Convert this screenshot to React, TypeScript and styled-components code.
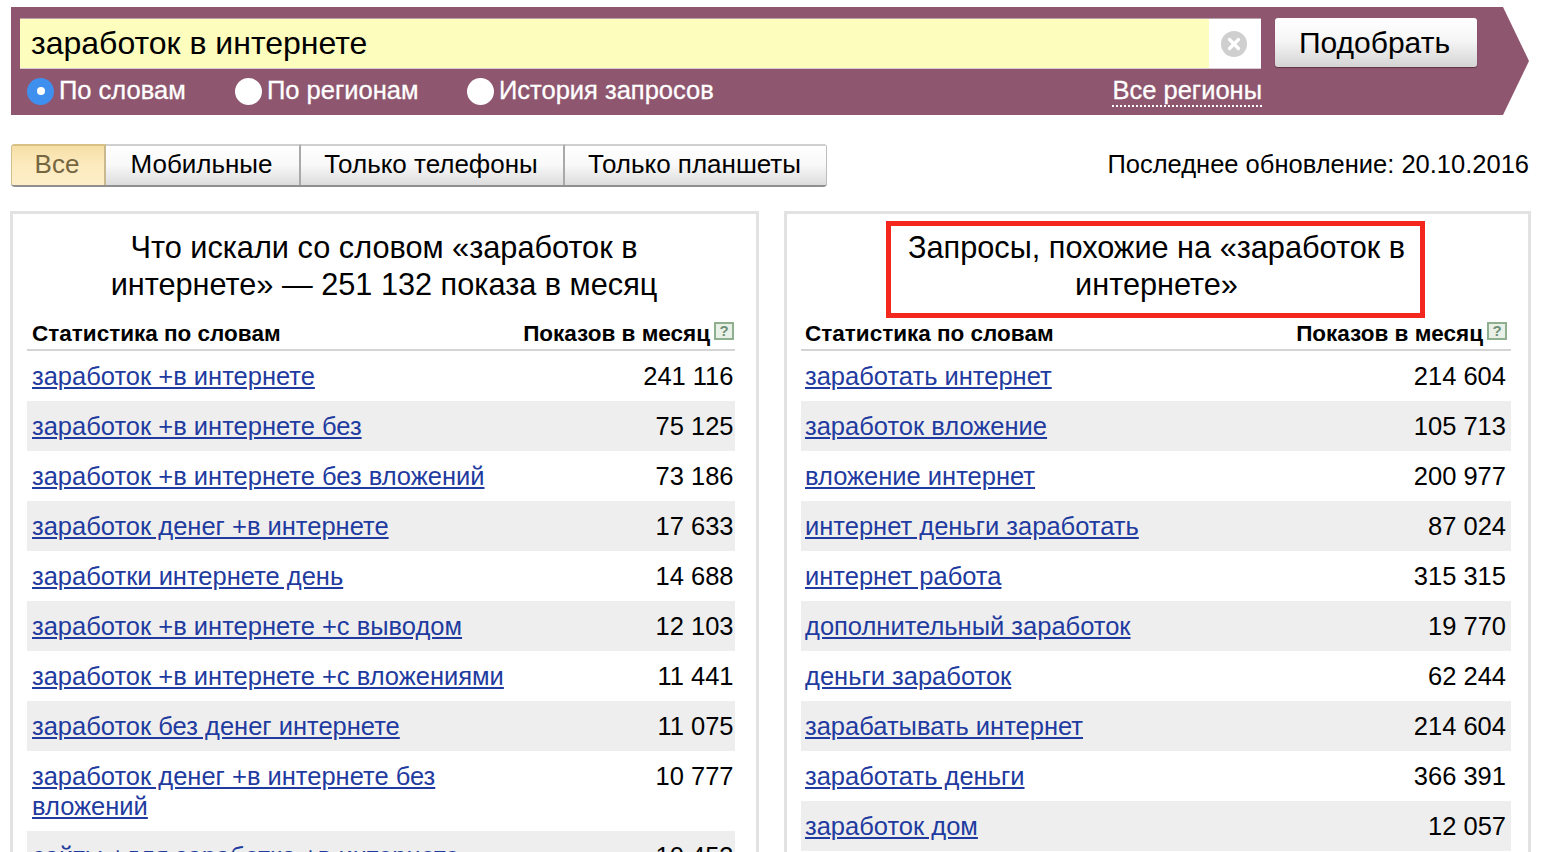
import React from "react";
import styled, { createGlobalStyle } from "styled-components";

const Global = createGlobalStyle`
  html, body { margin: 0; padding: 0; background: #fff; height: 852px; overflow: hidden; }
  body { font-family: "Liberation Sans", Arial, sans-serif; color: #000; }
`;

const Page = styled.div`
  width: 1544px;
  height: 852px;
  overflow: hidden;
  padding: 7px 13px 0 10px;
  box-sizing: border-box;
`;

const SearchBar = styled.div`
  margin-left: 1px;
  margin-right: 2px;
  height: 108px;
  background: #8f576f;
  clip-path: polygon(0 0, 1492px 0, 100% 50%, 1492px 100%, 0 100%);
  padding: 11px 0 0 9px;
  box-sizing: border-box;
`;

const SearchRow = styled.div`
  display: flex;
  align-items: flex-start;
  gap: 14px;
`;

const InputBox = styled.div`
  width: 1241px;
  height: 51px;
  box-sizing: border-box;
  background: #fff;
  border-top: 1px solid #b9a2ac;
  border-bottom: 1px solid #d9cbd1;
  display: flex;
`;

const InputValue = styled.div`
  flex: 1;
  background: #fdfdbd;
  font-size: 32px;
  line-height: 48px;
  padding-left: 11px;
`;

const ClearSlot = styled.div`
  width: 52px;
  display: flex;
  align-items: center;
  justify-content: center;
  padding-right: 2px;
  box-sizing: border-box;
`;

const SearchButton = styled.button`
  width: 202px;
  height: 49px;
  padding: 0 3px 0 0;
  border: 0;
  border-radius: 3px;
  background: linear-gradient(#ffffff 0%, #f6f6f6 45%, #d4d4d4 100%);
  box-shadow: 0 1px 1px rgba(60, 30, 40, 0.6);
  font-family: inherit;
  font-size: 30px;
  color: #000;
`;

const OptionsRow = styled.div`
  display: flex;
  align-items: center;
  height: 44px;
  width: 1242px;
  padding-left: 7px;
  box-sizing: border-box;
`;

const Radio = styled.label<{ $w: number }>`
  display: flex;
  align-items: center;
  gap: 5px;
  width: ${(p) => p.$w}px;
`;

const RadioText = styled.span`
  font-size: 25.5px;
  color: #fff;
  -webkit-text-stroke: 0.3px #fff;
  margin-top: -2px;
`;

const RadioDot = styled.span<{ $on?: boolean }>`
  width: 27px;
  height: 27px;
  flex: none;
  border-radius: 50%;
  background: ${(p) => (p.$on ? "#3f8fee" : "#fff")};
  display: flex;
  align-items: center;
  justify-content: center;
  &::after {
    content: "";
    width: 8px;
    height: 8px;
    border-radius: 50%;
    background: ${(p) => (p.$on ? "#fff" : "transparent")};
  }
`;

const RegionLink = styled.span`
  margin-left: auto;
  font-size: 25.5px;
  color: #fff;
  -webkit-text-stroke: 0.3px #fff;
  line-height: 30px;
  border-bottom: 2px dotted #fff;
`;

const TabsRow = styled.div`
  display: flex;
  align-items: center;
  justify-content: space-between;
  margin-top: 29px;
  margin-left: 1px;
  margin-right: 2px;
  height: 43px;
`;

const Tabs = styled.div`
  display: flex;
  border-radius: 4px;
  overflow: hidden;
  box-shadow: inset 0 0 0 1px #ccc;
  border-bottom: 2px solid #8f8f8f;
  height: 43px;
  box-sizing: border-box;
`;

const Tab = styled.div<{ $w: number; $active?: boolean }>`
  width: ${(p) => p.$w}px;
  box-sizing: border-box;
  display: flex;
  align-items: center;
  justify-content: center;
  font-size: 26px;
  padding: 0 2px 3px 0;
  color: ${(p) => (p.$active ? "#76663f" : "#000")};
  background: ${(p) =>
    p.$active
      ? "linear-gradient(#f6dfa6 0%, #fdebbf 50%, #fdeec9 100%)"
      : "linear-gradient(#ffffff 0%, #f8f8f8 50%, #dcdcdc 100%)"};
  border-top: 2px solid ${(p) => (p.$active ? "#d9c084" : "#cfcfcf")};
  border-left: ${(p) => (p.$active ? "1px solid #d2bd8b" : "0")};
  border-right: 2px solid ${(p) => (p.$active ? "#c9b98f" : "#a9a9a9")};
  &:last-child {
    border-right: 1px solid #bdbdbd;
  }
`;

const Updated = styled.div`
  font-size: 25.5px;
  padding-bottom: 3px;
`;

const Columns = styled.div`
  display: flex;
  gap: 25px;
  margin-top: 24px;
`;

const Panel = styled.section<{ $w: number; $wide?: boolean }>`
  width: ${(p) => p.$w}px;
  height: 660px;
  flex: none;
  box-sizing: border-box;
  border: 3px solid #e2e2e2;
  border-bottom: 0;
  padding: 0 ${(p) => (p.$wide ? 17 : 21)}px 0 14px;
  position: relative;
`;

const Heading = styled.h2<{ $wide?: boolean }>`
  margin: 0;
  padding: 16px ${(p) => (p.$wide ? "16px" : "30px")} 0 ${(p) => (p.$wide ? "17px" : "36px")};
  height: 102px;
  box-sizing: border-box;
  text-align: center;
  font-size: 30.7px;
  line-height: 36.5px;
  font-weight: 400;
`;

const Highlight = styled.div`
  position: absolute;
  left: 99px;
  top: 7px;
  width: 539px;
  height: 97px;
  box-sizing: border-box;
  border: 5px solid #f4271e;
`;

const TableHead = styled.div<{ $wide?: boolean }>`
  display: flex;
  justify-content: space-between;
  align-items: center;
  height: 35px;
  padding: 2px ${(p) => (p.$wide ? 4 : 1)}px 0 ${(p) => (p.$wide ? 4 : 5)}px;
  border-bottom: 2px solid #d4d4d4;
  font-size: 22.5px;
  font-weight: 700;
  box-sizing: border-box;
`;

const HeadRight = styled.span`
  display: flex;
  align-items: center;
`;

const HelpIcon = styled.span`
  width: 20px;
  height: 18px;
  box-sizing: border-box;
  margin-left: 4px;
  margin-top: -6px;
  border: 2px solid #8fb08f;
  background: #e8f0e8;
  color: #6f8f75;
  font-size: 15px;
  line-height: 14px;
  text-align: center;
`;

const Row = styled.div<{ $alt: boolean; $wide?: boolean }>`
  display: flex;
  justify-content: space-between;
  align-items: flex-start;
  padding: 10px ${(p) => (p.$wide ? "5px" : "1.5px")} 10px ${(p) => (p.$wide ? 4 : 5)}px;
  background: ${(p) => (p.$alt ? "#eeeeee" : "#fff")};
  font-size: 25.5px;
  line-height: 30px;
`;

const QueryLink = styled.a`
  color: #1f3ba0;
  text-decoration: underline;
  text-underline-offset: 2px;
  max-width: 480px;
`;

const Count = styled.span`
  white-space: nowrap;
`;

const leftRows: [string, string][] = [
  ["заработок +в интернете", "241 116"],
  ["заработок +в интернете без", "75 125"],
  ["заработок +в интернете без вложений", "73 186"],
  ["заработок денег +в интернете", "17 633"],
  ["заработки интернете день", "14 688"],
  ["заработок +в интернете +с выводом", "12 103"],
  ["заработок +в интернете +с вложениями", "11 441"],
  ["заработок без денег интернете", "11 075"],
  ["заработок денег +в интернете без вложений", "10 777"],
  ["сайты +для заработка +в интернете", "10 453"],
];

const rightRows: [string, string][] = [
  ["заработать интернет", "214 604"],
  ["заработок вложение", "105 713"],
  ["вложение интернет", "200 977"],
  ["интернет деньги заработать", "87 024"],
  ["интернет работа", "315 315"],
  ["дополнительный заработок", "19 770"],
  ["деньги заработок", "62 244"],
  ["зарабатывать интернет", "214 604"],
  ["заработать деньги", "366 391"],
  ["заработок дом", "12 057"],
];

const ClearIcon = () => (
  <svg width="26" height="26" viewBox="0 0 26 26">
    <circle cx="13" cy="13" r="13" fill="#cfcfcf" />
    <path d="M8.5 8.5l9 9M17.5 8.5l-9 9" stroke="#fff" strokeWidth="3.2" strokeLinecap="round" />
  </svg>
);

const StatTable = ({ rows, wide }: { rows: [string, string][]; wide?: boolean }) => (
  <>
    <TableHead $wide={wide}>
      <span>Статистика по словам</span>
      <HeadRight>
        Показов в месяц
        <HelpIcon>?</HelpIcon>
      </HeadRight>
    </TableHead>
    {rows.map(([q, n], i) => (
      <Row key={q} $alt={i % 2 === 1} $wide={wide}>
        <QueryLink href="#">{q}</QueryLink>
        <Count>{n}</Count>
      </Row>
    ))}
  </>
);

export default function App() {
  return (
    <Page>
      <Global />
      <SearchBar>
        <SearchRow>
          <InputBox>
            <InputValue>заработок в интернете</InputValue>
            <ClearSlot>
              <ClearIcon />
            </ClearSlot>
          </InputBox>
          <SearchButton>Подобрать</SearchButton>
        </SearchRow>
        <OptionsRow>
          <Radio $w={208}>
            <RadioDot $on />
            <RadioText>По словам</RadioText>
          </Radio>
          <Radio $w={232}>
            <RadioDot />
            <RadioText>По регионам</RadioText>
          </Radio>
          <Radio $w={300}>
            <RadioDot />
            <RadioText>История запросов</RadioText>
          </Radio>
          <RegionLink>Все регионы</RegionLink>
        </OptionsRow>
      </SearchBar>
      <TabsRow>
        <Tabs>
          <Tab $w={95} $active>Все</Tab>
          <Tab $w={195}>Мобильные</Tab>
          <Tab $w={264}>Только телефоны</Tab>
          <Tab $w={262}>Только планшеты</Tab>
        </Tabs>
        <Updated>Последнее обновление: 20.10.2016</Updated>
      </TabsRow>
      <Columns>
        <Panel $w={749}>
          <Heading>Что искали со словом «заработок в интернете» — 251 132 показа в месяц</Heading>
          <StatTable rows={leftRows} />
        </Panel>
        <Panel $w={747} $wide>
          <Heading $wide>
            Запросы, похожие на «заработок в
            <br />
            интернете»
          </Heading>
          <Highlight />
          <StatTable rows={rightRows} wide />
        </Panel>
      </Columns>
    </Page>
  );
}
